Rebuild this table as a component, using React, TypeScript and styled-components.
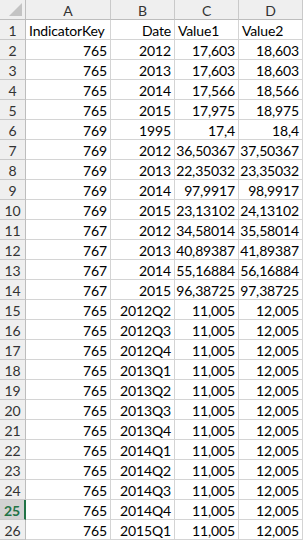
import React from "react";
import styled, {createGlobalStyle} from "styled-components";

const GlobalStyle = createGlobalStyle`
  body {
    margin: 0;
    background: #ffffff;
    font-family: Lato, "Liberation Sans", sans-serif;
  }
`

const Sheet = styled.div`
  display: grid;
  grid-template-columns: 26px 85px 64px 64px 64px;
  grid-auto-rows: 20px;
  width: 303px;
  overflow: hidden;
  font-size: 14px;
  letter-spacing: -0.15px;
  color: #000;
`

const Corner = styled.div`
  position: relative;
  background: #efefef;
  border-right: 1px solid #bdbdbd;
  border-bottom: 1px solid #bdbdbd;
  box-sizing: border-box;

  &::after {
    content: "";
    position: absolute;
    right: 3px;
    bottom: 3px;
    width: 0;
    height: 0;
    border-left: 13px solid transparent;
    border-bottom: 13px solid #c3c3c3;
  }
`

const ColHead = styled.div`
  display: flex;
  align-items: center;
  justify-content: center;
  background: #efefef;
  border-right: 1px solid #c9c9c9;
  border-bottom: 1px solid #bdbdbd;
  box-sizing: border-box;
  color: #333;
  font-size: 14px;
  padding-top: 1px;
`

const RowHead = styled.div<{$active?: boolean}>`
  display: flex;
  align-items: center;
  justify-content: center;
  background: ${p => p.$active ? "#d2d2d2" : "#efefef"};
  border-right: ${p => p.$active ? "2px solid #217346" : "1px solid #bdbdbd"};
  border-bottom: 1px solid #c9c9c9;
  box-sizing: border-box;
  color: ${p => p.$active ? "#217346" : "#333"};
  font-weight: ${p => p.$active ? 700 : 400};
  font-size: 14px;
  padding-top: 1px;
`

const Cell = styled.div<{$align?: "left" | "right"}>`
  display: flex;
  align-items: center;
  justify-content: ${p => p.$align === "left" ? "flex-start" : "flex-end"};
  padding: 1px 3px 0 3px;
  border-right: 1px solid #d4d4d4;
  border-bottom: 1px solid #d4d4d4;
  box-sizing: border-box;
  white-space: nowrap;
  overflow: hidden;
`

const rows: [string, string, string, string][] = [
    ["765", "2012", "17,603", "18,603"],
    ["765", "2013", "17,603", "18,603"],
    ["765", "2014", "17,566", "18,566"],
    ["765", "2015", "17,975", "18,975"],
    ["769", "1995", "17,4", "18,4"],
    ["769", "2012", "36,50367", "37,50367"],
    ["769", "2013", "22,35032", "23,35032"],
    ["769", "2014", "97,9917", "98,9917"],
    ["769", "2015", "23,13102", "24,13102"],
    ["767", "2012", "34,58014", "35,58014"],
    ["767", "2013", "40,89387", "41,89387"],
    ["767", "2014", "55,16884", "56,16884"],
    ["767", "2015", "96,38725", "97,38725"],
    ["765", "2012Q2", "11,005", "12,005"],
    ["765", "2012Q3", "11,005", "12,005"],
    ["765", "2012Q4", "11,005", "12,005"],
    ["765", "2013Q1", "11,005", "12,005"],
    ["765", "2013Q2", "11,005", "12,005"],
    ["765", "2013Q3", "11,005", "12,005"],
    ["765", "2013Q4", "11,005", "12,005"],
    ["765", "2014Q1", "11,005", "12,005"],
    ["765", "2014Q2", "11,005", "12,005"],
    ["765", "2014Q3", "11,005", "12,005"],
    ["765", "2014Q4", "11,005", "12,005"],
    ["765", "2015Q1", "11,005", "12,005"],
]

export default function App() {
    return (
        <>
            <GlobalStyle/>
            <Sheet>
                <Corner/>
                {["A", "B", "C", "D"].map(c => <ColHead key={c}>{c}</ColHead>)}

                <RowHead>1</RowHead>
                <Cell $align="left">IndicatorKey</Cell>
                <Cell>Date</Cell>
                <Cell $align="left">Value1</Cell>
                <Cell $align="left">Value2</Cell>

                {rows.map((r, i) => (
                    <React.Fragment key={i}>
                        <RowHead $active={i + 2 === 25}>{i + 2}</RowHead>
                        {r.map((v, j) => <Cell key={j}>{v}</Cell>)}
                    </React.Fragment>
                ))}
            </Sheet>
        </>
    );
}
